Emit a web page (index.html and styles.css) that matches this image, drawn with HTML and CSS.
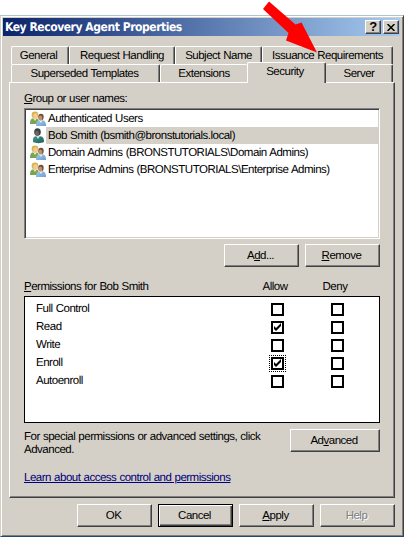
FILE: index.html
```html
<!DOCTYPE html>
<html lang="en">
<head>
<meta charset="utf-8">
<title>Key Recovery Agent Properties</title>
<link rel="stylesheet" href="styles.css">
</head>
<body>
<svg width="0" height="0" class="defs">
  <defs>
    <linearGradient id="teal" x2="1" y2="1"><stop stop-color="#46918b"/><stop offset="1" stop-color="#1c655f"/></linearGradient>
    <linearGradient id="blue" x2="1" y2="1"><stop stop-color="#a3caea"/><stop offset="1" stop-color="#6c9fd0"/></linearGradient>
    <symbol id="group" viewBox="0 0 16 16">
      <path d="M0 13c0-4 1-6 5-6 3 0 4 2 4 6z" fill="#77a651"/>
      <path d="M3 7l2 3 2-3z" fill="#e7efcf"/>
      <circle cx="5" cy="4" r="3.4" fill="#d8b44c"/>
      <ellipse cx="5.5" cy="5" rx="2.2" ry="2.7" fill="#f1c99c"/>
      <path d="M6 15c0-4 1.500-6 5-6s5 2 5 6z" fill="url(#blue)"/>
      <path d="M9 9l2 3 1.500-3z" fill="#eef6fc"/>
      <ellipse cx="11" cy="6" rx="2.700" ry="3.300" fill="#67503d"/>
      <ellipse cx="10.500" cy="7" rx="1.900" ry="2.600" fill="#c98e66"/>
    </symbol>
    <symbol id="user" viewBox="0 0 16 16">
      <path d="M3 14c0-4 0-6 5-6s6 2 6 6c-3 1.500-8 1.500-11 0z" fill="url(#teal)"/>
      <path d="M6 8l2 3 2-3z" fill="#d5e4df"/>
      <ellipse cx="7.500" cy="4" rx="3.300" ry="3.800" fill="#354047"/>
      <ellipse cx="7" cy="5.300" rx="1.900" ry="2.700" fill="#74645c"/>
    </symbol>
  </defs>
</svg>
<main class="dialog">
  <header class="titlebar">
    <h1>Key Recovery Agent Properties</h1>
    <button class="cap">?</button>
    <button class="cap cap-close"><svg width="8" height="7" viewBox="0 0 8 7"><path d="M.5 0l7 7M7.500 0l-7 7" stroke="#000" stroke-width="1.500"/></svg></button>
  </header>
  <nav class="tabs">
    <div class="tabrow">
      <span class="tab t-general"><b>General</b></span><span class="tab t-request"><b>Request Handling</b></span><span class="tab t-subject"><b>Subject Name</b></span><span class="tab t-issuance"><b>Issuance Requirements</b></span>
    </div>
    <div class="tabrow">
      <span class="tab t-super"><b>Superseded Templates</b></span><span class="tab t-ext"><b>Extensions</b></span><span class="tab t-sec"><b>Security</b></span><span class="tab t-server"><b>Server</b></span>
    </div>
  </nav>
  <section class="pane">
    <div class="label"><u>G</u>roup or user names:</div>
    <ul class="users">
      <li><svg class="ico"><use href="#group"/></svg><span>Authenticated Users</span></li>
      <li class="selected"><svg class="ico"><use href="#user"/></svg><span>Bob Smith (bsmith@bronstutorials.local)</span></li>
      <li><svg class="ico"><use href="#group"/></svg><span>Domain Admins (BRONSTUTORIALS\Domain Admins)</span></li>
      <li><svg class="ico"><use href="#group"/></svg><span>Enterprise Admins (BRONSTUTORIALS\Enterprise Admins)</span></li>
    </ul>
    <div class="actions"><button class="btn">A<u>d</u>d...</button><button class="btn"><u>R</u>emove</button></div>
    <div class="permhead"><span><u>P</u>ermissions for Bob Smith</span><span class="c">Allow</span><span class="c">Deny</span></div>
    <div class="perms">
      <div class="perm"><span>Full Control</span><i class="box"></i><i class="box"></i></div>
      <div class="perm"><span>Read</span><i class="box"><svg viewBox="0 0 9 9"><path d="M1 3v3l2 2 5-5V0L3 5z"/></svg></i><i class="box"></i></div>
      <div class="perm"><span>Write</span><i class="box"></i><i class="box"></i></div>
      <div class="perm"><span>Enroll</span><i class="box focus"><svg viewBox="0 0 9 9"><path d="M1 3v3l2 2 5-5V0L3 5z"/></svg></i><i class="box"></i></div>
      <div class="perm"><span>Autoenroll</span><i class="box"></i><i class="box"></i></div>
    </div>
    <div class="special"><p>For special permissions or advanced settings, click<br>Advanced.</p><button class="btn wide">Ad<u>v</u>anced</button></div>
    <a class="learn">Learn about access control and permissions</a>
  </section>
  <footer class="footer"><button class="btn">OK</button><button class="btn default">Cancel</button><button class="btn"><u>A</u>pply</button><button class="btn disabled">Help</button></footer>
</main>
<svg class="arrow" width="60" height="56" viewBox="0 0 60 56"><path d="M7 .5L33.500 23.500L39.500 21.500L55 51.500L24 39.500L26.500 32L1 8Z" fill="#fe0000"/></svg>
</body>
</html>
```
FILE: styles.css
```css
* { box-sizing: border-box; }
body { margin: 0; background: #fff; font: 11.5px/14px "Liberation Sans", Arial, sans-serif; letter-spacing: -.49px; word-spacing: .4px; text-rendering: geometricPrecision; color: #000; }
.defs { position: absolute; }
.dialog {
  margin-top: 15px; width: 404px; height: 522px; padding: 2px 2px 0 1px;
  background: #d4d0c8; border: 1px solid; border-color: #a9c5d6 #404040 #204b70 #d4d0c8;
  box-shadow: inset 1px 1px #fff, inset -1px -1px #808080;
  display: flex; flex-direction: column;
}
.titlebar {
  margin-left: 1px; width: 397px; height: 18px; flex: none; display: flex; align-items: center; padding-right: 1px;
  background: linear-gradient(90deg, #0a246a, #a6caf0);
}
h1 { margin: 0 auto 0 2px; font: bold 12px/18px "DejaVu Sans Condensed", "DejaVu Sans", sans-serif; color: #fff; letter-spacing: -.45px; word-spacing: 0; white-space: nowrap; }
button { font: inherit; letter-spacing: inherit; word-spacing: inherit; color: inherit; padding: 0; border: 1px solid; border-color: #fff #404040 #404040 #fff; background: #d4d0c8; box-shadow: inset -1px -1px #808080; border-radius: 0; }
.cap { width: 16px; height: 14px; font: bold 13px/12px "Liberation Sans", sans-serif; display: flex; align-items: center; justify-content: center; }
.cap-close { margin-left: 2px; }
.tabs { margin: 10px 0 0 9px; width: 382px; flex: none; }
.tabrow { display: flex; height: 18px; }
.tab {
  height: 18px; border: 1px solid; border-color: #fff #404040 transparent #fff; border-bottom: 0; border-radius: 2px 2px 0 0;
  box-shadow: inset -1px 0 #808080; text-align: center; line-height: 19px; white-space: nowrap; background: #d4d0c8;
}
.tab b { font-weight: normal; }
.t-general { width: 58px; padding-right: 3px; }
.t-request { width: 106px; }
.t-subject { width: 87px; }
.t-issuance { width: 131px; }
.t-super { width: 149px; padding-right: 2px; }
.t-ext { width: 87px; border-right: 0; box-shadow: none; }
.t-sec { width: 79px; height: 21px; margin: -2px 0 -1px; z-index: 1; line-height: 19px; padding-right: 3px; }
.t-server { width: 67px; border-left: 0; }
.pane {
  margin-left: 7px; width: 386px; height: 416px; flex: none; padding: 9px 13px 0 14px;
  border: 1px solid; border-color: #fff #404040 #404040 #fff; box-shadow: inset -1px -1px #808080;
}
.label { height: 16px; line-height: 15px; }
.users {
  list-style: none; margin: 0; width: 356px; height: 131px; padding: 1px;
  background: #fff; border: 1px solid; border-color: #808080 #fff #fff #808080; box-shadow: inset 1px 1px #404040, inset -1px -1px #d4d0c8;
}
li { display: flex; height: 17px; padding-left: 4px; align-items: center; }
.ico { width: 16px; height: 16px; margin-right: 0; flex: none; }
li span { flex: 1; height: 17px; padding-left: 2px; line-height: 19px; white-space: nowrap; }
.selected span { background: #d4d0c8; }
.actions { display: flex; justify-content: flex-end; gap: 6px; margin: 5px 1px 0 0; }
.btn { width: 75px; height: 23px; padding: 0 2px 1px 0; line-height: 20px; }
.permhead { display: grid; grid-template-columns: 221px 60px 60px; margin-top: 13px; height: 16px; line-height: 15px; }
.c { text-align: center; }
.perms { width: 356px; height: 127px; border: 1px solid #000; background: #fff; padding: 3px 0 0 11px; }
.perm { height: 18px; display: grid; grid-template-columns: 235px 60px 60px; align-items: center; }
.perm span { line-height: 19px; height: 18px; }
.box { width: 13px; height: 13px; border: 2px solid #000; }
.box svg { display: block; width: 9px; height: 9px; }
.focus { outline: 1px dotted #000; outline-offset: 1px; }
.special { display: flex; justify-content: space-between; margin: 6px 1px 0 0; height: 41px; }
.special p { margin: 0; line-height: 13px; padding-top: 2px; white-space: nowrap; }
.wide { width: 90px; }
.learn { display: inline-block; padding-top: 1px; color: #00007b; text-decoration: underline; white-space: nowrap; }
.footer { display: flex; gap: 6px; margin: 6px 0 0 75px; }
.default { border-color: #000; box-shadow: inset 1px 1px #fff, inset -1px -1px #404040, inset -2px -2px #808080; }
.disabled { color: #808080; text-shadow: 1px 1px #fff; }
.arrow { position: absolute; left: 262px; top: 1px; }
```
